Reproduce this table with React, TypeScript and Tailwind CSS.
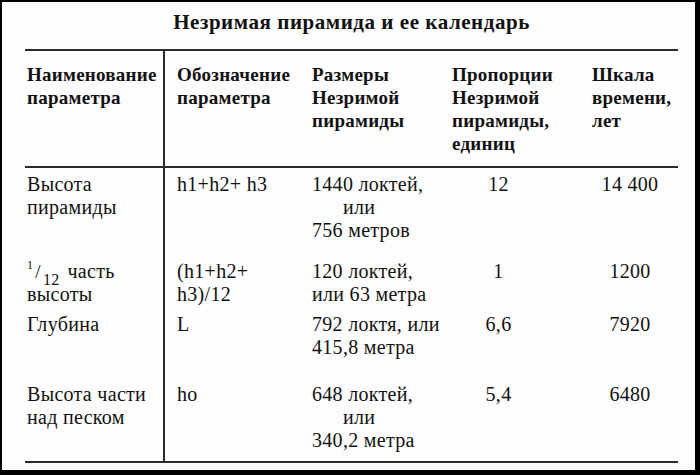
import React from 'react'

type Row = {
  name: React.ReactNode
  symbol: React.ReactNode
  size: React.ReactNode
  ratio: string
  years: string
  pad: string
}

const serif = { fontFamily: '"Liberation Serif", "DejaVu Serif", serif' }

const rows: Row[] = [
  {
    name: <>Высота<br />пирамиды</>,
    symbol: 'h1+h2+ h3',
    size: <>1440 локтей,<br /><span className="pl-[31px]">или</span><br />756 метров</>,
    ratio: '12',
    years: '14 400',
    pad: 'pt-[5px] pb-[9px]',
  },
  {
    name: (
      <>
        <span className="text-[12px] leading-[0] align-[9px]">1</span>
        <span className="text-[19px] leading-[0] ml-[2px]">/</span>
        <span className="text-[16px] leading-[0] ml-[2px] align-[-7px]">12</span>
        <span className="ml-[8px]">часть</span>
        <br />высоты
      </>
    ),
    symbol: <>(h1+h2+<br />h3)/12</>,
    size: <>120 локтей,<br />или 63 метра</>,
    ratio: '1',
    years: '1200',
    pad: 'pt-[9px] pb-[3px]',
  },
  {
    name: 'Глубина',
    symbol: 'L',
    size: <>792 локтя, или<br />415,8 метра</>,
    ratio: '6,6',
    years: '7920',
    pad: 'pt-[4px] pb-[12px]',
  },
  {
    name: <>Высота части<br />над песком</>,
    symbol: 'ho',
    size: <>648 локтей,<br /><span className="pl-[31px]">или</span><br />340,2 метра</>,
    ratio: '5,4',
    years: '6480',
    pad: 'pt-[12px] pb-[9px]',
  },
]

export default function App() {
  return (
    <div className="w-[700px] h-[475px] bg-black pt-[2px] pl-[2px] pr-[5px] pb-[5px]" style={serif}>
      <div className="h-full bg-[#fdfdfd] text-[#111] pl-[23px] pr-[17px]">
        {/* заголовок */}
        <div className="pt-[8px] pb-[15px] text-center text-[21px] leading-[24px] font-bold tracking-[0.55px]">
          Незримая пирамида и ее календарь
        </div>

        <div className="border-t-2 border-b-2 border-[#2b2b2b]">
          {/* шапка таблицы */}
          <div className="flex border-b-2 border-[#2b2b2b] text-[19px] leading-[23px] font-bold tracking-[0.25px] whitespace-nowrap">
            <div className="w-[138px] pl-[2px] pt-[12px] pb-[11px]">Наименование<br />параметра</div>
            <div className="w-[137px] border-l-2 border-[#2b2b2b] pl-[12px] pt-[12px] pb-[11px]">Обозначение<br />параметра</div>
            <div className="w-[145px] pl-[12px] pt-[12px] pb-[11px]">Размеры<br />Незримой<br />пирамиды</div>
            <div className="w-[107px] pl-[7px] pt-[12px] pb-[11px]">Пропорции<br />Незримой<br />пирамиды,<br />единиц</div>
            <div className="flex-1 pl-[40px] pt-[12px] pb-[11px]">Шкала<br />времени,<br />лет</div>
          </div>

          {rows.map((r, i) => (
            <div key={i} className="flex text-[20px] leading-[23px] tracking-[0.3px] whitespace-nowrap">
              <div className={`w-[138px] pl-[2px] ${r.pad}`}>{r.name}</div>
              <div className={`w-[137px] border-l-2 border-[#2b2b2b] pl-[12px] ${r.pad}`}>{r.symbol}</div>
              <div className={`w-[145px] pl-[12px] ${r.pad}`}>{r.size}</div>
              <div className={`w-[107px] text-center ${r.pad}`}>{r.ratio}</div>
              <div className={`flex-1 pl-[30px] text-center ${r.pad}`}>{r.years}</div>
            </div>
          ))}
        </div>
      </div>
    </div>
  )
}
